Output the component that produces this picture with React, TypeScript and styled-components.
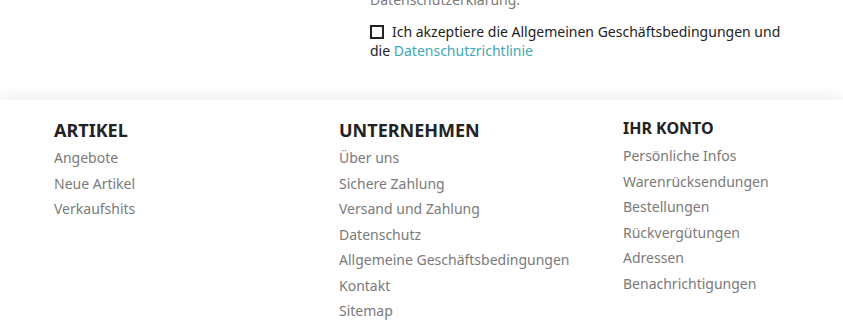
import React from "react";
import styled, { createGlobalStyle } from "styled-components";

const Global = createGlobalStyle`
  html, body { margin: 0; padding: 0; background: #fff; }
  body { font-family: "Noto Sans", "Open Sans", sans-serif; overflow: hidden; }
  * { box-sizing: border-box; }
`;

const Page = styled.div`
  width: 843px;
  height: 332px;
  overflow: hidden;
  background: #fff;
`;

const Consent = styled.section`
  display: flow-root;
  height: 100px;
  padding-left: 370px;
  background: #fff;
`;

const Note = styled.p`
  margin: -10px 0 0;
  font-size: 14px;
  line-height: 20px;
  color: #7a7a7a;
`;

const Agree = styled.label`
  display: block;
  width: 422px;
  margin-top: 12px;
  font-size: 14px;
  line-height: 19px;
  color: #232323;
`;

const Box = styled.span`
  display: inline-block;
  width: 14px;
  height: 14px;
  border: 2px solid #232323;
  margin-right: 8px;
  vertical-align: -2px;
`;

const Link = styled.a`
  color: #3fa8b6;
  text-decoration: none;
`;

const Footer = styled.footer`
  position: relative;
  background: #fff;
  padding: 19px 0 0 54px;
  display: grid;
  grid-template-columns: 285px 284px 220px;
  box-shadow: 0 -5px 12px rgba(0, 0, 0, 0.06);
  height: 232px;
`;

const Column = styled.div<{ $shift?: number }>`
  margin-top: ${(p) => -(p.$shift ?? 0)}px;
`;

const Heading = styled.h4<{ $size: number }>`
  margin: 0 0 4px;
  font-size: ${(p) => p.$size}px;
  line-height: 22px;
  font-weight: 700;
  color: #232323;
  text-transform: uppercase;
`;

const List = styled.ul`
  list-style: none;
  margin: 0;
  padding: 0;
`;

const Item = styled.li`
  font-size: 14px;
  line-height: 25.5px;
  color: #7a7a7a;
`;

const columns = [
  { title: "Artikel", size: 18, shift: 0, items: ["Angebote", "Neue Artikel", "Verkaufshits"] },
  {
    title: "Unternehmen",
    size: 18,
    shift: 0,
    items: [
      "Über uns",
      "Sichere Zahlung",
      "Versand und Zahlung",
      "Datenschutz",
      "Allgemeine Geschäftsbedingungen",
      "Kontakt",
      "Sitemap",
    ],
  },
  {
    title: "Ihr Konto",
    size: 16,
    shift: 2,
    items: [
      "Persönliche Infos",
      "Warenrücksendungen",
      "Bestellungen",
      "Rückvergütungen",
      "Adressen",
      "Benachrichtigungen",
    ],
  },
];

export default function App() {
  return (
    <Page>
      <Global />
      <Consent>
        <Note>Datenschutzerklärung.</Note>
        <Agree>
          <Box />
          Ich akzeptiere die Allgemeinen Geschäftsbedingungen und die{" "}
          <Link href="#">Datenschutzrichtlinie</Link>
        </Agree>
      </Consent>
      <Footer>
        {columns.map((c) => (
          <Column key={c.title} $shift={c.shift}>
            <Heading $size={c.size}>{c.title}</Heading>
            <List>
              {c.items.map((i) => (
                <Item key={i}>{i}</Item>
              ))}
            </List>
          </Column>
        ))}
      </Footer>
    </Page>
  );
}
